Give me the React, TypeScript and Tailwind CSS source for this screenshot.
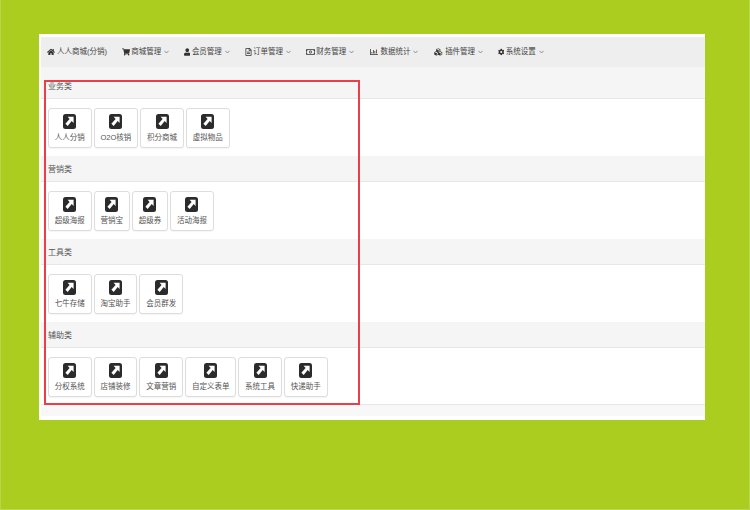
import { FaHome, FaShoppingCart, FaUser, FaRegFileAlt, FaRegMoneyBillAlt, FaRegChartBar, FaCubes, FaCog } from "react-icons/fa";

const navItems = [
  { label: "商城管理", icon: FaShoppingCart, w: 8 },
  { label: "会员管理", icon: FaUser, w: 6.5 },
  { label: "订单管理", icon: FaRegFileAlt, w: 7 },
  { label: "财务管理", icon: FaRegMoneyBillAlt, w: 9 },
  { label: "数据统计", icon: FaRegChartBar, w: 10 },
  { label: "插件管理", icon: FaCubes, w: 10.5 },
  { label: "系统设置", icon: FaCog, w: 6.5 },
];

const sections = [
  { title: "业务类", tools: ["人人分销", "O2O核销", "积分商城", "虚拟物品"] },
  { title: "营销类", tools: ["超级海报", "营销宝", "超级券", "活动海报"] },
  { title: "工具类", tools: ["七牛存储", "淘宝助手", "会员群发"] },
  { title: "辅助类", tools: ["分权系统", "店铺装修", "文章营销", "自定义表单", "系统工具", "快递助手"] },
];

function Caret() {
  return (
    <svg width="5" height="4" viewBox="0 0 5 4" className="ml-[1.5px] block">
      <path d="M0.4 0.8 2.5 3 4.6 0.8" fill="none" stroke="#777" strokeWidth="0.8" />
    </svg>
  );
}

function ToolIcon() {
  return (
    <svg width="13" height="15" viewBox="0 0 13 15" className="block">
      <rect width="13" height="15" rx="2.5" fill="#2b2b2b" />
      <path d="M4.6 2.8h6v6.2L8.7 7.1 4.7 12 2.4 9.8 6.6 4.9z" fill="#fff" />
    </svg>
  );
}

function ToolButton({ name }: { name: string }) {
  return (
    <div className="flex h-10 flex-col items-center rounded-[3px] border border-[#dddddd] bg-white px-[5.85px] pt-[5px] shadow-[0_1px_1px_rgba(0,0,0,0.04)]">
      <ToolIcon />
      <span className="mt-[3px] whitespace-nowrap text-[7.5px] leading-[11px] text-[#555]">{name}</span>
    </div>
  );
}

export default function App() {
  return (
    <div
      className="relative h-[510px] w-[750px] overflow-hidden border-x border-b border-x-[#b8d64a] border-b-[#bcd84f] bg-[#abcd20] pl-[38px] pt-[34px]"
      style={{ fontFamily: '"Liberation Sans", "Noto Sans CJK SC", sans-serif' }}
    >
      <div className="flex h-[386px] w-[666px] flex-col bg-white pl-[2px] pt-[3px]">
        <div className="flex h-[30px] shrink-0 items-center gap-[14.7px] bg-[#eeeeee] pl-[6px] text-[7.5px] text-[#444]">
          <div className="flex items-center gap-[2px]">
            <FaHome className="h-[8px] w-[8px] text-[#333]" />
            <span className="whitespace-nowrap">人人商城(分销)</span>
          </div>
          {navItems.map((item) => (
            <div key={item.label} className="flex items-center gap-[1.5px]">
              <item.icon className="h-[8px] text-[#333]" style={{ width: item.w }} />
              <span className="whitespace-nowrap">{item.label}</span>
              <Caret />
            </div>
          ))}
        </div>

        {sections.map((section, i) => (
          <div key={section.title}>
            <div
              className={`flex items-center border-b border-[#e7e7e7] bg-[#f5f5f5] pl-[7px] text-[8px] text-[#555] ${
                i === 0 ? "h-[32px] pt-[9px]" : "h-[26px] pt-[2px]"
              }`}
            >
              {section.title}
            </div>
            <div className="flex h-[57px] gap-[2px] pl-[7px] pt-[9px]">
              {section.tools.map((tool) => (
                <ToolButton key={tool} name={tool} />
              ))}
            </div>
          </div>
        ))}

        <div className="mt-[-1px] h-[12px] border-t border-[#e7e7e7] bg-[#f8f8f8]" />
      </div>

      {/* annotation drawn over the screenshot */}
      <div className="absolute left-[43px] top-[80px] h-[325px] w-[316px] border-2 border-[#e8404a]" />
    </div>
  );
}
